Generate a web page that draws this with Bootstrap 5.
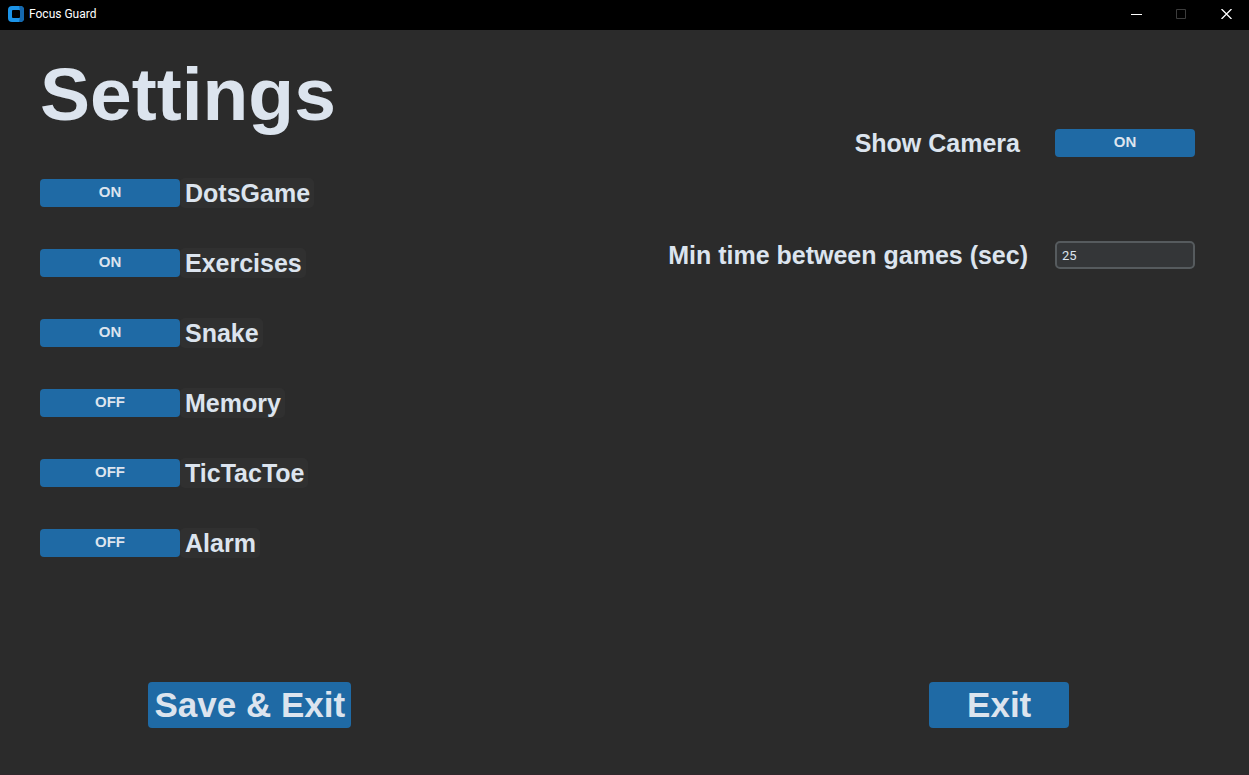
<!DOCTYPE html>
<html lang="en" data-bs-theme="dark">
<head>
<meta charset="utf-8">
<meta name="viewport" content="width=device-width, initial-scale=1">
<title>Focus Guard</title>
<link href="https://cdn.jsdelivr.net/npm/bootstrap@5.3.0/dist/css/bootstrap.min.css" rel="stylesheet">
<style>
  body { background: #2b2b2b; color: #dce4ee; font-family: "Liberation Sans", Arial, sans-serif; border-bottom: 1px solid #30272c; }
  .titlebar { height: 30px; background: #000; color: #fff; font: 12px/16px Roboto, sans-serif; padding-left: 8px; padding-bottom: 2px; }
  .app-name { margin-left: 5px; }
  .win-btn { display: flex; align-items: center; justify-content: center; width: 45px; height: 28px; background: none; border: 0; padding: 0; color: #fff; }
  .win-btn:disabled { color: #3c3c3c; }
  .page-title { font-size: 75px; line-height: 75px; font-weight: 700; margin: 0 0 46px; color: #dce4ee; }
  .settings { padding: 27px 54px 0 40px; }
  .games { gap: 40px; }
  .setting-label { font-size: 25px; line-height: 30px; font-weight: 700; }
  .game-label { background: #303030; border-radius: 5px; padding: 0 4px 0 5px; }
  .btn-app { --bs-btn-bg: #1f6aa5; --bs-btn-color: #dce4ee; --bs-btn-hover-bg: #144870; --bs-btn-hover-color: #dce4ee;
    --bs-btn-active-bg: #144870; --bs-btn-border-width: 0; --bs-btn-border-radius: 4px; --bs-btn-font-weight: 700; min-width: 140px; }
  .btn-toggle { height: 28px; padding: 0 0 2px; font-size: 15px; line-height: 26px; }
  .btn-big { height: 46px; padding: 0 6px; font-size: 35px; line-height: 46px; }
  .options { padding-top: 71px; gap: 82px; }
  .time-box { width: 140px; height: 28px; min-height: 28px; padding: 0 5px; background: #343638; border: 2px solid #565b5e; border-radius: 5px;
    color: #dce4ee; font: 13px/24px Roboto, sans-serif; }
  .gap-camera { gap: 35px; }
  .gap-time { gap: 27px; }
  .footer-space { width: 20%; }
  .footer-slot { width: 40%; }
  .actions { padding-bottom: 46px; }
</style>
</head>
<body class="d-flex flex-column min-vh-100">
<header class="titlebar d-flex align-items-center">
  <svg width="16" height="16" viewBox="0 0 16 16" aria-hidden="true">
    <rect width="16" height="16" rx="4" fill="#1c94e8"/>
    <path d="M11 0h1a4 4 0 0 1 4 4v8a4 4 0 0 1-4 4h-1l1-5V5z" fill="#1668ae"/>
    <rect x="4" y="4" width="8" height="8" rx="1" fill="#000"/>
  </svg>
  <span class="app-name me-auto">Focus Guard</span>
  <button class="win-btn" type="button" aria-label="Minimize"><svg width="11" height="10" viewBox="0 0 11 10"><path d="M0 5.5h11" stroke="currentColor"/></svg></button>
  <button class="win-btn" type="button" aria-label="Maximize" disabled><svg width="11" height="10" viewBox="0 0 11 10"><path d="M.5.5h9v9h-9z" fill="none" stroke="currentColor"/></svg></button>
  <button class="win-btn" type="button" aria-label="Close"><svg width="11" height="10" viewBox="0 0 11 10"><path d="M.5 0l10 10M10.500 0l-10 10" stroke="currentColor" stroke-width="1.3"/></svg></button>
</header>
<main class="flex-grow-1 d-flex flex-column">
  <div class="settings d-flex justify-content-between">
    <section>
      <h1 class="page-title">Settings</h1>
      <div class="games d-flex flex-column align-items-start">
        <div class="d-flex align-items-center"><button id="dots" class="btn btn-app btn-toggle" type="button">ON</button><label for="dots" class="setting-label game-label">DotsGame</label></div>
        <div class="d-flex align-items-center"><button id="exercises" class="btn btn-app btn-toggle" type="button">ON</button><label for="exercises" class="setting-label game-label">Exercises</label></div>
        <div class="d-flex align-items-center"><button id="snake" class="btn btn-app btn-toggle" type="button">ON</button><label for="snake" class="setting-label game-label">Snake</label></div>
        <div class="d-flex align-items-center"><button id="memory" class="btn btn-app btn-toggle" type="button">OFF</button><label for="memory" class="setting-label game-label">Memory</label></div>
        <div class="d-flex align-items-center"><button id="tictactoe" class="btn btn-app btn-toggle" type="button">OFF</button><label for="tictactoe" class="setting-label game-label">TicTacToe</label></div>
        <div class="d-flex align-items-center"><button id="alarm" class="btn btn-app btn-toggle" type="button">OFF</button><label for="alarm" class="setting-label game-label">Alarm</label></div>
      </div>
    </section>
    <section class="options d-flex flex-column align-items-end">
      <div class="gap-camera d-flex align-items-center"><label for="camera" class="setting-label">Show Camera</label><button id="camera" class="btn btn-app btn-toggle" type="button">ON</button></div>
      <div class="gap-time d-flex align-items-center"><label for="min-time" class="setting-label">Min time between games (sec)</label><input id="min-time" class="form-control time-box" type="text" inputmode="numeric" value="25"></div>
    </section>
  </div>
  <div class="actions d-flex mt-auto">
    <div class="footer-slot text-center"><button class="btn btn-app btn-big" type="button">Save &amp; Exit</button></div>
    <div class="footer-space"></div>
    <div class="footer-slot text-center"><button class="btn btn-app btn-big" type="button">Exit</button></div>
  </div>
</main>
<script src="https://cdn.jsdelivr.net/npm/bootstrap@5.3.0/dist/js/bootstrap.bundle.min.js"></script>
</body>
</html>
